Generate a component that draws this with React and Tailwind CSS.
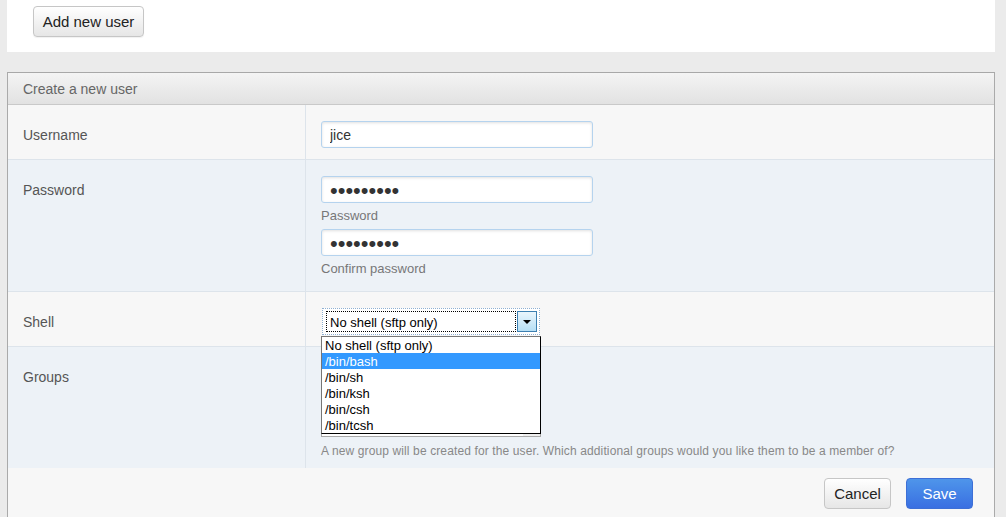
import { useState } from 'react';

const shells = ['No shell (sftp only)', '/bin/bash', '/bin/sh', '/bin/ksh', '/bin/csh', '/bin/tcsh'];

function TextInput({ value, dots }) {
  return (
    <input
      readOnly
      value={value}
      className={`block w-[272px] h-[27px] rounded-[3px] border border-[#b5d3ee] bg-white px-[8px] text-[#333] shadow-[inset_0_1px_3px_rgba(0,0,0,0.12)] outline-none ${
        dots ? 'text-[22px] leading-none pt-[2px]' : 'text-[14px] pt-[1px]'
      }`}
    />
  );
}

function Row({ label, tone, last, children }) {
  return (
    <div className={`flex ${tone === 'blue' ? 'bg-[#edf2f7]' : 'bg-[#f7f7f7]'} ${last ? '' : 'border-b border-[#dde4eb]'}`}>
      <div className="w-[298px] shrink-0 border-r border-[#dde4eb] pl-[15px] pt-[20px] text-[14px] leading-[20px] text-[#555]">
        {label}
      </div>
      <div className="flex-1 pl-[15px]">{children}</div>
    </div>
  );
}

function ShellSelect() {
  const [active] = useState(1);
  return (
    <div className="relative w-[220px]">
      <div className="ml-[1px] flex h-[27px] w-[218px] items-center border border-dotted border-[#8fb0d2] bg-white pl-[3px] pr-[2px]">
        <div className="flex h-[21px] w-[191px] items-center border border-dotted border-black pl-[3px] pt-[2px] text-[13px] text-black">
          No shell (sftp only)
        </div>
        <div className="ml-[1px] flex h-[21px] w-[20px] items-center justify-center border border-[#3c7fb1] bg-gradient-to-b from-[#eaf6fd] to-[#b6dff5]">
          <div className="h-0 w-0 border-x-[4px] border-t-[4px] border-x-transparent border-t-black" />
        </div>
      </div>
      <div className="absolute left-0 top-[28px] z-10 w-[220px] border border-black border-l-[#767676] border-t-[#767676] bg-white">
        {shells.map((s, i) => (
          <div
            key={s}
            className={`h-[16px] pl-[3px] pt-[1px] text-[13px] leading-[16px] ${i === active ? 'bg-[#3399ff] text-white' : 'text-black'}`}
          >
            {s}
          </div>
        ))}
      </div>
    </div>
  );
}

export default function App() {
  return (
    <div className="min-h-screen bg-[#ebebeb] pl-[7px] pr-[11px] font-['Liberation_Sans',Arial,sans-serif]">
      <div className="h-[52px] bg-white pl-[26px] pt-[6px]">
        <button
          type="button"
          className="h-[31px] w-[111px] rounded-[4px] border border-[#c6c6c6] bg-gradient-to-b from-white to-[#e6e6e6] pt-[1px] text-[15px] text-[#222] shadow-[0_1px_1px_rgba(0,0,0,0.06)]"
        >
          Add new user
        </button>
      </div>

      <div className="mt-[20px] border-x border-t border-[#a8a8a8] border-x-[#aaa]">
        <div className="flex h-[32px] items-center border-b border-[#c9c9c9] bg-gradient-to-b from-[#f4f4f4] to-[#e2e2e2] pl-[15px] pt-[1px] text-[14px] text-[#666]">
          Create a new user
        </div>

        <Row label="Username">
          <div className="pt-[16px] pb-[11px]">
            <TextInput value="jice" />
          </div>
        </Row>

        <Row label="Password" tone="blue">
          <div className="pt-[16px] pb-[15px]">
            <TextInput value="•••••••••" dots />
            <p className="mt-[5px] mb-[-1px] text-[13px] leading-[16px] text-[#777]">Password</p>
            <div className="mt-[6px]">
              <TextInput value="•••••••••" dots />
            </div>
            <p className="mt-[5px] mb-[-1px] text-[13px] leading-[16px] text-[#777]">Confirm password</p>
          </div>
        </Row>

        <Row label="Shell">
          <div className="pt-[16px] pb-[11px]">
            <ShellSelect />
          </div>
        </Row>

        <Row label="Groups" tone="blue" last>
          <div className="pt-[16px] pb-[10px]">
            <div className="flex h-[74px] w-[220px] justify-end border border-[#a9a9a9] bg-white">
              <div className="w-[17px] bg-[#f0f0f0]" />
            </div>
            <p className="mt-[6px] mb-[-1px] text-[12px] leading-[16px] tracking-[0.12px] text-[#888]">
              A new group will be created for the user. Which additional groups would you like them to be a member of?
            </p>
          </div>
        </Row>

        <div className="flex h-[49px] justify-end gap-[15px] bg-[#f7f7f7] pt-[10px] pr-[21px]">
          <button
            type="button"
            className="h-[31px] w-[67px] rounded-[4px] border border-[#c6c6c6] bg-gradient-to-b from-white to-[#e6e6e6] pt-[1px] text-[15px] text-[#222]"
          >
            Cancel
          </button>
          <button
            type="button"
            className="h-[31px] w-[67px] rounded-[4px] border border-[#3d6fd6] bg-gradient-to-b from-[#4f95ea] to-[#3a6fe2] pt-[1px] text-[15px] text-white"
          >
            Save
          </button>
        </div>
      </div>
    </div>
  );
}
